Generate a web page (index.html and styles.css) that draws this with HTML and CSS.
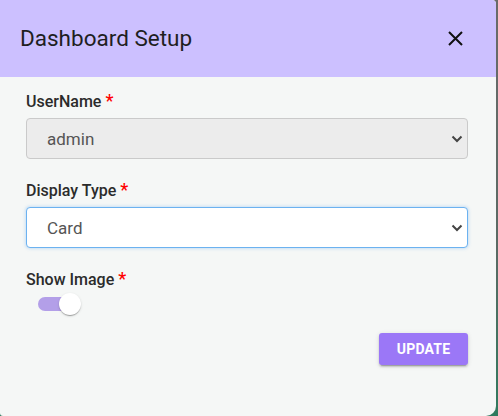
FILE: index.html
```html
<!DOCTYPE html>
<html>
<head>
<meta charset="utf-8">
<link rel="stylesheet" href="styles.css">
</head>
<body>
<div class="dialog">
  <div class="dialog-header">
    <h2 class="dialog-title">Dashboard Setup</h2>
    <button class="close-btn" aria-label="close">
      <svg width="15" height="15" viewBox="0 0 15 15"><path d="M1 1L14 14M14 1L1 14" stroke="#111" stroke-width="2" fill="none"/></svg>
    </button>
  </div>
  <div class="dialog-body">
    <div class="form-group">
      <label class="field-label">UserName <span class="req">*</span></label>
      <div class="select-wrap">
        <select class="select select-disabled" disabled><option>admin</option></select>
        <svg class="chevron" width="12" height="8" viewBox="0 0 12 8"><path d="M1.5 1.5L6 6L10.5 1.5" stroke="#444" stroke-width="2" fill="none"/></svg>
      </div>
    </div>
    <div class="form-group">
      <label class="field-label">Display Type <span class="req">*</span></label>
      <div class="select-wrap">
        <select class="select select-focus"><option>Card</option></select>
        <svg class="chevron" width="12" height="8" viewBox="0 0 12 8"><path d="M1.5 1.5L6 6L10.5 1.5" stroke="#444" stroke-width="2" fill="none"/></svg>
      </div>
    </div>
    <div class="form-group toggle-group">
      <label class="field-label">Show Image <span class="req">*</span></label>
      <div class="switch">
        <span class="switch-track"></span>
        <span class="switch-thumb"></span>
      </div>
    </div>
    <div class="actions">
      <button class="btn-update">UPDATE</button>
    </div>
  </div>
</div>
</body>
</html>
```
FILE: styles.css
```css
html, body {
  margin: 0;
  padding: 0;
  height: 100%;
}
body {
  background: linear-gradient(#6a6a6a, #5a6a64 60%, #2f7a5e);
  font-family: Roboto, "Liberation Sans", sans-serif;
  overflow: hidden;
}
.dialog {
  width: 496px;
  height: 416px;
  background: #f5f7f6;
  border-radius: 0 4px 10px 3px;
  overflow: hidden;
  display: flex;
  flex-direction: column;
}
.dialog-header {
  height: 77px;
  background: #ccc0ff;
  display: flex;
  align-items: center;
  justify-content: space-between;
  padding: 0 33px 0 20px;
  flex: none;
}
.dialog-title {
  margin: 0;
  font-size: 22.5px;
  font-weight: 400;
  color: #1f1f1f;
  line-height: 26px;
  position: relative;
  top: -1px;
}
.close-btn {
  background: none;
  border: 0;
  padding: 0;
  width: 15px;
  height: 15px;
  display: flex;
}
.dialog-body {
  padding: 13px 28px 0 26px;
  display: flex;
  flex-direction: column;
}
.form-group {
  display: flex;
  flex-direction: column;
  margin-bottom: 20px;
}
.field-label {
  display: block;
  font-size: 16px;
  font-weight: 500;
  line-height: 24px;
  height: 24px;
  color: #2b2b2b;
  margin-bottom: 4px;
}
.req {
  color: #ff0000;
  font-size: 18px;
  line-height: 1;
}
.select-wrap {
  position: relative;
}
.select {
  appearance: none;
  -webkit-appearance: none;
  width: 100%;
  height: 41px;
  box-sizing: border-box;
  border-radius: 4px;
  font-family: Roboto, "Liberation Sans", sans-serif;
  font-size: 17px;
  color: #555;
  padding: 0 20px;
  outline: none;
  margin: 0;
}
.select-disabled {
  background: #ececec;
  border: 1px solid #cacaca;
  opacity: 1;
  color: #555;
}
.select-focus {
  background: #fff;
  border: 1px solid #6cb2f0;
  box-shadow: 0 0 3px 1px rgba(120, 180, 240, 0.35);
}
.chevron {
  position: absolute;
  right: 5px;
  top: 17px;
  pointer-events: none;
}
.toggle-group {
  margin-bottom: 17px;
}
.toggle-group .field-label {
  margin-bottom: 0;
}
.switch {
  position: relative;
  height: 24px;
  width: 58px;
}
.switch-track {
  position: absolute;
  left: 12px;
  top: 5px;
  width: 34px;
  height: 14px;
  border-radius: 7px;
  background: #b39fe8;
}
.switch-thumb {
  position: absolute;
  left: 33px;
  top: 1px;
  width: 22px;
  height: 22px;
  border-radius: 50%;
  background: #fff;
  box-shadow: 0 2px 1px -1px rgba(0,0,0,0.2), 0 1px 1px 0 rgba(0,0,0,0.14), 0 1px 3px 0 rgba(0,0,0,0.12);
}
.actions {
  display: flex;
  justify-content: flex-end;
}
.btn-update {
  height: 32px;
  width: 89px;
  border: 0;
  border-radius: 3px;
  background: #9b77f7;
  color: #fff;
  font-family: Roboto, "Liberation Sans", sans-serif;
  font-size: 14px;
  font-weight: 700;
  letter-spacing: 0.2px;
  box-shadow: 0 3px 1px -2px rgba(0,0,0,0.2), 0 2px 2px 0 rgba(0,0,0,0.14), 0 1px 5px 0 rgba(0,0,0,0.12);
  padding: 0;
}
```
